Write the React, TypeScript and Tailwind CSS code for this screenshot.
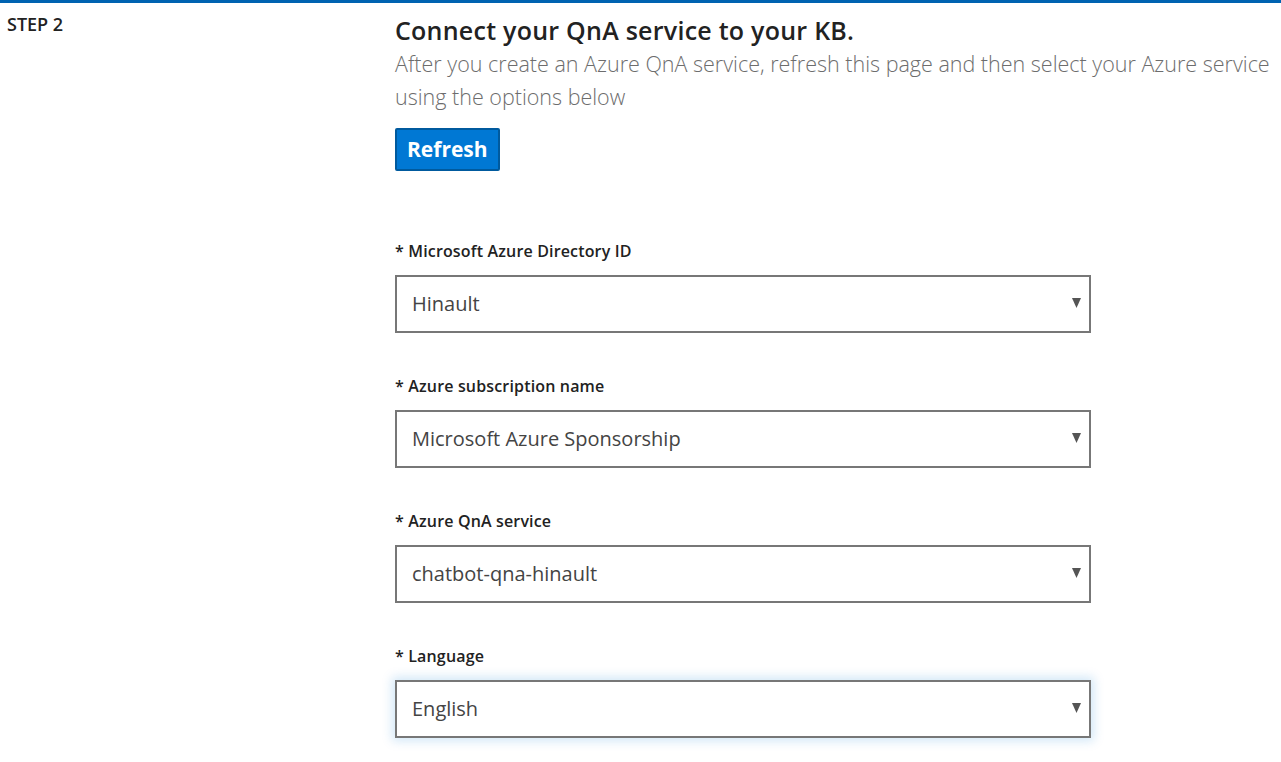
const FIELDS = [
  { label: "Microsoft Azure Directory ID", value: "Hinault" },
  { label: "Azure subscription name", value: "Microsoft Azure Sponsorship" },
  { label: "Azure QnA service", value: "chatbot-qna-hinault" },
  { label: "Language", value: "English", focused: true },
];

function SelectBox({ value, focused }: { value: string; focused?: boolean }) {
  return (
    <div
      className={`flex h-[58px] w-[696px] items-center justify-between border-2 border-[#777777] bg-white pl-[15px] pr-[8px] ${
        focused ? "shadow-[0_0_10px_3px_rgba(0,120,212,0.18)]" : ""
      }`}
    >
      <span className="text-[20px] text-[#444444]">{value}</span>
      <svg width="9" height="10" viewBox="0 0 9 10" className="mb-[2px]">
        <path d="M0 0H9L4.5 10Z" fill="#555555" />
      </svg>
    </div>
  );
}

export default function App() {
  return (
    <div
      className="min-h-[762px] w-[1281px] border-t-[3px] border-[#0063b1] bg-white"
      style={{ fontFamily: '"Open Sans", "Noto Sans", sans-serif' }}
    >
      <div className="flex">
        <div className="w-[395px] shrink-0 pl-[7px] pt-[8px]">
          <span className="text-[18px] font-semibold text-[#222222]">STEP 2</span>
        </div>
        <div className="flex-1">
          <h2 className="mt-[11px] text-[25px] font-semibold leading-[32px] tracking-[0.01em] text-[#222222]">
            Connect your QnA service to your KB.
          </h2>
          <p className="mt-[1px] max-w-[885px] text-[21.5px] font-light leading-[33px] text-[#6d6d6d]">
            After you create an Azure QnA service, refresh this page and then select your Azure service using the options below
          </p>
          <button
            type="button"
            className="mt-[15px] h-[43px] rounded-[2px] border-2 border-[#005a9e] bg-[#0078d4] px-[10px] text-[21px] font-bold text-white"
          >
            Refresh
          </button>
          <div className="mt-[68px] flex flex-col gap-[41px]">
            {FIELDS.map((f) => (
              <div key={f.label} className="flex flex-col gap-[12px]">
                <label className="text-[16px] font-semibold leading-[24px] tracking-[0.01em] text-[#222222]">
                  * {f.label}
                </label>
                <SelectBox value={f.value} focused={f.focused} />
              </div>
            ))}
          </div>
        </div>
      </div>
    </div>
  );
}
